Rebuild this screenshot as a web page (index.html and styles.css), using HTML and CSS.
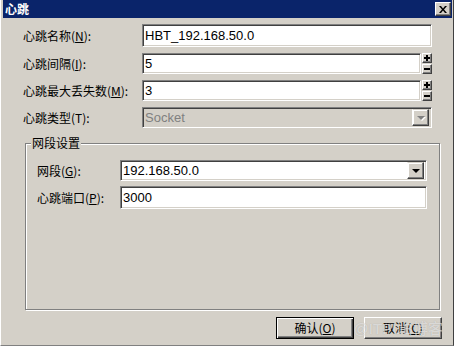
FILE: index.html
```html
<!DOCTYPE html>
<html lang="zh-CN">
<head>
    <meta charset="UTF-8">
    <title>心跳</title>
    <link rel="stylesheet" href="styles.css">
</head>
<body>
    <div class="window">
        <div class="titlebar">
            <span class="title">心跳</span>
            <span class="close">
                <svg width="8" height="7" viewBox="0 0 8 7"><path d="M0 0h2l2 2.5 2-2.5h2l-3 3.5 3 3.5h-2l-2-2.5-2 2.5h-2l3-3.5z" fill="#000"/></svg>
            </span>
        </div>

        <div class="content">
            <div class="row">
                <span class="label">心跳名称(<u>N</u>):</span>
                <div class="edit tall">HBT_192.168.50.0</div>
            </div>
            <div class="row">
                <span class="label">心跳间隔(<u>I</u>):</span>
                <div class="edit">5</div>
                <div class="spin">
                    <span class="spin-btn"><svg width="6" height="6" viewBox="0 0 6 6"><path d="M2 0h2v2h2v2h-2v2h-2v-2h-2v-2h2z" fill="#000"/></svg></span>
                    <span class="spin-btn"><svg width="6" height="6" viewBox="0 0 6 6"><path d="M0 2h6v2h-6z" fill="#000"/></svg></span>
                </div>
            </div>
            <div class="row">
                <span class="label">心跳最大丢失数(<u>M</u>):</span>
                <div class="edit">3</div>
                <div class="spin">
                    <span class="spin-btn"><svg width="6" height="6" viewBox="0 0 6 6"><path d="M2 0h2v2h2v2h-2v2h-2v-2h-2v-2h2z" fill="#000"/></svg></span>
                    <span class="spin-btn"><svg width="6" height="6" viewBox="0 0 6 6"><path d="M0 2h6v2h-6z" fill="#000"/></svg></span>
                </div>
            </div>
            <div class="row">
                <span class="label">心跳类型(T):</span>
                <div class="edit combo disabled">
                    <span class="combo-text">Socket</span>
                    <span class="drop-btn"><span class="arrow"></span></span>
                </div>
            </div>

            <div class="group">
                <span class="legend">网段设置</span>
                <div class="row">
                    <span class="label short">网段(<u>G</u>):</span>
                    <div class="edit combo">
                        <span class="combo-text">192.168.50.0</span>
                        <span class="drop-btn"><span class="arrow"></span></span>
                    </div>
                </div>
                <div class="row">
                    <span class="label short">心跳端口(<u>P</u>):</span>
                    <div class="edit tall">3000</div>
                </div>
            </div>

            <div class="buttons">
                <span class="button default">确认(<u>O</u>)</span>
                <span class="button">取消(<u>C</u>)</span>
            </div>
        </div>
        <span class="watermark">@ITPUB博客</span>
    </div>
</body>
</html>
```

FILE: styles.css
```css
body {
    margin: 0;
    font-family: "Noto Sans CJK SC", sans-serif;
    font-size: 12px;
    color: #000;
}

.window {
    position: relative;
    width: 454px;
    height: 346px;
    box-sizing: border-box;
    background-color: #d4d0c8;
    border-left: 1px solid #fff;
    border-right: 1px solid #404040;
    border-bottom: 1px solid #808080;
    padding: 0 1px 0 2px;
}

.titlebar {
    height: 18px;
    background-color: #0a246a;
    display: flex;
    align-items: center;
    justify-content: space-between;
    padding: 0 1px 0 2px;
}

.title {
    color: #fff;
    font-weight: bold;
    font-size: 12px;
    line-height: 18px;
}

.close {
    width: 16px;
    height: 14px;
    box-sizing: border-box;
    background-color: #d4d0c8;
    border: 1px solid;
    border-color: #fff #404040 #404040 #fff;
    box-shadow: inset -1px -1px #808080;
    display: flex;
    align-items: center;
    justify-content: center;
}

.content {
    padding: 6px 20px 0 20px;
}

/* rows of label + field */
.row {
    display: flex;
    align-items: center;
    margin-bottom: 6px;
}

.label {
    width: 119px;
    flex-shrink: 0;
    white-space: nowrap;
    line-height: 16px;
}

.label.short {
    width: 83px;
}

.edit {
    flex: 1;
    height: 21px;
    box-sizing: border-box;
    background-color: #fff;
    border: 1px solid;
    border-color: #808080 #fff #fff #808080;
    box-shadow: inset 1px 1px #404040, inset -1px -1px #d4d0c8;
    font-family: "Liberation Sans", Arial, sans-serif;
    font-size: 13px;
    line-height: 19px;
    padding-left: 2px;
    overflow: hidden;
}

.edit.tall {
    height: 23px;
    line-height: 21px;
}

.spin {
    display: flex;
    flex-direction: column;
    margin-left: 1px;
    gap: 1px;
}

.spin-btn {
    width: 10px;
    height: 10px;
    box-sizing: border-box;
    background-color: #d4d0c8;
    border: 1px solid;
    border-color: #fff #404040 #404040 #fff;
    box-shadow: inset -1px -1px #808080;
    display: flex;
    align-items: center;
    justify-content: center;
}

.combo {
    display: flex;
    align-items: center;
    padding-right: 2px;
}

.combo-text {
    flex: 1;
}

.combo.disabled {
    background-color: #d4d0c8;
    color: #808080;
}

.drop-btn {
    width: 17px;
    height: 17px;
    box-sizing: border-box;
    background-color: #d4d0c8;
    border: 1px solid;
    border-color: #d4d0c8 #404040 #404040 #fff;
    box-shadow: inset -1px -1px #808080, inset 1px 1px #fff;
    display: flex;
    align-items: center;
    justify-content: center;
}

.arrow {
    width: 0;
    height: 0;
    border-left: 4px solid transparent;
    border-right: 4px solid transparent;
    border-top: 4px solid #000;
    margin-top: 1px;
}

.disabled .arrow {
    border-top-color: #808080;
    filter: drop-shadow(1px 1px 0 #fff);
}

/* group box */
.group {
    position: relative;
    height: 167px;
    box-sizing: border-box;
    margin: 15px -8px 0 2px;
    padding: 16px 12px 0 11px;
    border: 1px solid #808080;
    box-shadow: inset 1px 1px #fff, 1px 1px #fff;
}

.group .row {
    margin-bottom: 5px;
}

.legend {
    position: absolute;
    top: -9px;
    left: 5px;
    padding: 0 1px;
    background-color: #d4d0c8;
    line-height: 16px;
}

.buttons {
    display: flex;
    justify-content: flex-end;
    gap: 10px;
    margin: 7px -10px 0 0;
}

.button {
    width: 78px;
    height: 22px;
    box-sizing: border-box;
    border: 1px solid;
    border-color: #fff #404040 #404040 #fff;
    box-shadow: inset -1px -1px #808080;
    text-align: center;
    line-height: 20px;
}

.button.default {
    border-color: #000;
    box-shadow: inset 1px 1px #fff, inset -1px -1px #404040, inset -2px -2px #808080;
}

.watermark {
    position: absolute;
    right: 10px;
    bottom: 7px;
    font-family: "Liberation Sans", "Noto Sans CJK SC", sans-serif;
    font-size: 15px;
    line-height: 18px;
    color: rgba(255, 255, 255, 0.55);
    text-shadow: 0 0 1px rgba(128, 128, 128, 0.5);
    pointer-events: none;
}
```
